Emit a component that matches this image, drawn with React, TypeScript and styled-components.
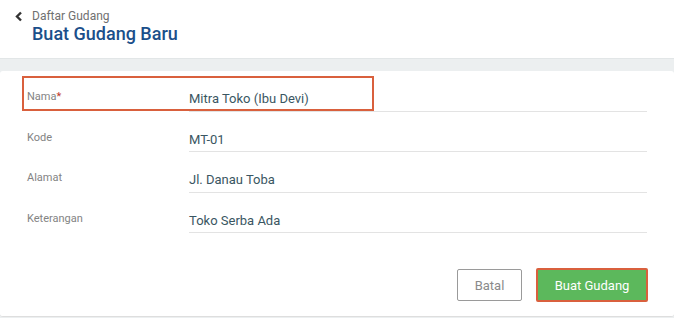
import React from "react";
import styled, { createGlobalStyle } from "styled-components";

const Global = createGlobalStyle`
  html, body { margin: 0; padding: 0; background: #eceff0; }
  body { font-family: Roboto, "Noto Sans", Arial, sans-serif; }
  * { box-sizing: border-box; }
`;

const Page = styled.div`
  width: 674px;
  height: 318px;
  display: flex;
  flex-direction: column;
  background: #eceff0;
  overflow: hidden;
`;

const Header = styled.header`
  height: 59px;
  background: #ffffff;
  border-bottom: 1px solid #e2e6e7;
  display: flex;
  align-items: flex-start;
  padding: 9px 0 0 13px;
  gap: 8px;
`;

const BackIcon = styled.svg`
  width: 11px;
  height: 11px;
  margin-top: 2px;
  flex: none;
`;

const Titles = styled.div`
  display: flex;
  flex-direction: column;
`;

const Crumb = styled.span`
  font-size: 12px;
  line-height: 14px;
  color: #707070;
`;

const Title = styled.h1`
  margin: 0;
  font-size: 18px;
  line-height: 22px;
  font-weight: 500;
  color: #1b4f8a;
`;

const Card = styled.section`
  margin-top: 12px;
  background: #ffffff;
  border-radius: 3px;
  border-bottom: 1px solid #dedede;
  display: flex;
  flex-direction: column;
  padding: 0 27px 14px 27px;
`;

const Row = styled.div`
  position: relative;
  display: flex;
  align-items: stretch;
  height: 40.6px;
`;

const Label = styled.label`
  width: 162px;
  flex: none;
  font-size: 11px;
  color: #838383;
  padding-top: 19px;
  line-height: 13px;
`;

const Required = styled.span`
  color: #c0392b;
`;

const Field = styled.div`
  flex: 1;
  border-bottom: 1px solid #e3e3e3;
  font-size: 13px;
  color: #3a5662;
  line-height: 16px;
  padding-top: 20px;
`;

const Highlight = styled.span`
  position: absolute;
  left: -5px;
  top: 5px;
  width: 352px;
  height: 35px;
  border: 2px solid #d9603d;
  pointer-events: none;
`;

const Actions = styled.div`
  display: flex;
  justify-content: flex-end;
  align-items: center;
  gap: 14px;
  margin-top: 35px;
`;

const Button = styled.button<{ $primary?: boolean }>`
  font-family: Roboto, "Noto Sans", Arial, sans-serif;
  font-size: 13px;
  height: ${(p) => (p.$primary ? "34px" : "32px")};
  padding: 0;
  width: ${(p) => (p.$primary ? "112px" : "65px")};
  border-radius: 2px;
  cursor: pointer;
  background: ${(p) => (p.$primary ? "#5cb85c" : "#ffffff")};
  color: ${(p) => (p.$primary ? "#ffffff" : "#8a8a8a")};
  border: ${(p) => (p.$primary ? "2px solid #d9603d" : "1px solid #9a9a9a")};
  margin-right: ${(p) => (p.$primary ? "-1px" : "0")};
`;

const fields = [
  { label: "Nama", value: "Mitra Toko (Ibu Devi)", required: true },
  { label: "Kode", value: "MT-01" },
  { label: "Alamat", value: "Jl. Danau Toba" },
  { label: "Keterangan", value: "Toko Serba Ada" },
];

export default function App() {
  return (
    <Page>
      <Global />
      <Header>
        <BackIcon viewBox="0 0 11 11">
          <path d="M8 1.5 L4 5.5 L8 9.5" fill="none" stroke="#333" strokeWidth="2.4" />
        </BackIcon>
        <Titles>
          <Crumb>Daftar Gudang</Crumb>
          <Title>Buat Gudang Baru</Title>
        </Titles>
      </Header>
      <Card>
        {fields.map((f) => (
          <Row key={f.label}>
            <Label>
              {f.label}
              {f.required && <Required>*</Required>}
            </Label>
            <Field>{f.value}</Field>
            {f.required && <Highlight />}
          </Row>
        ))}
        <Actions>
          <Button>Batal</Button>
          <Button $primary>Buat Gudang</Button>
        </Actions>
      </Card>
    </Page>
  );
}
